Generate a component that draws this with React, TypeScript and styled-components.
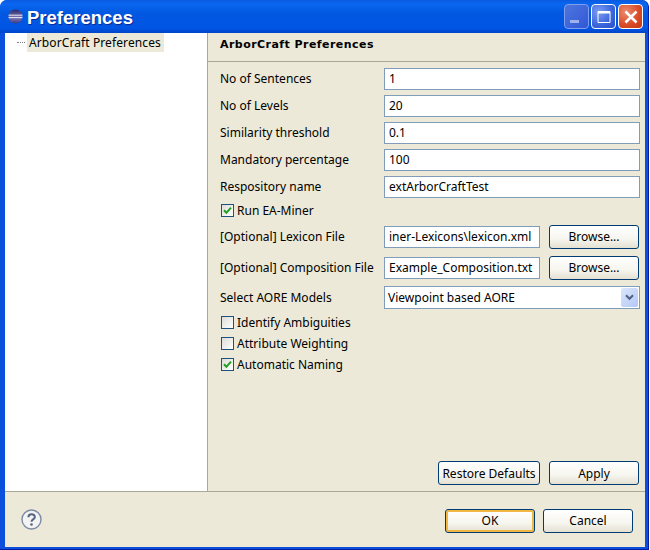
import React, { FunctionComponent } from 'react'
import styled, { createGlobalStyle } from 'styled-components'

const GlobalStyle = createGlobalStyle`
  html, body {
    margin: 0;
    padding: 0;
    background: #ffffff;
  }
  body {
    width: 650px;
    height: 550px;
    overflow: hidden;
    font-family: "Noto Sans", "Liberation Sans", sans-serif;
    font-size: 12px;
    color: #000000;
  }
`

const Window = styled.div`
  width: 649px;
  height: 550px;
  box-sizing: border-box;
  display: flex;
  flex-direction: column;
  background: #0a50dc;
  border-radius: 7px 7px 0 0;
  border-right: 1px solid #001ea0;
  border-bottom: 1px solid #001ea0;
`

const TitleBar = styled.div`
  height: 33px;
  flex: none;
  display: flex;
  align-items: center;
  padding: 0 5px 0 8px;
  gap: 4px;
  background: linear-gradient(180deg, #0a5ae0 0%, #0a66f0 12%, #0258e0 40%, #0055e5 85%, #0046c8 100%);
  border-radius: 7px 7px 0 0;
`

const TitleText = styled.div`
  flex: 1;
  padding-top: 3px;
  font-family: "Liberation Sans", sans-serif;
  font-weight: 700;
  font-size: 18.5px;
  color: #ffffff;
  text-shadow: 1px 1px 0 #0a2a90;
`

const WindowButtons = styled.div`
  display: flex;
  gap: 2px;
`

const WindowButton = styled.div<{ $kind: 'min' | 'max' | 'close' }>`
  width: 25px;
  height: 25px;
  box-sizing: border-box;
  border-radius: 4px;
  display: flex;
  align-items: center;
  justify-content: center;
  border: 1px solid ${({ $kind }) => ($kind === 'min' ? '#7f9ef0' : '#ffffff')};
  background: ${({ $kind }) =>
    $kind === 'close'
      ? 'radial-gradient(circle at 30% 30%, #ec8a70, #d84a25 60%, #c23a18)'
      : $kind === 'max'
        ? 'radial-gradient(circle at 30% 30%, #7c9cf2, #3a64dc 60%, #2a50cc)'
        : 'linear-gradient(135deg, #4f75dc, #3058d8)'};
`

const MinimizeBar = styled.span`
  width: 9px;
  height: 3px;
  margin: 9px 5px 0 0;
  background: #9db2ea;
`

const Body = styled.div`
  flex: 1;
  min-height: 0;
  margin: 0 3px 2px 5px;
  display: flex;
  flex-direction: column;
  background: #ece9d8;
`

const Main = styled.div`
  height: 458px;
  flex: none;
  display: flex;
  border-bottom: 1px solid #aca899;
`

const TreePane = styled.div`
  width: 202px;
  flex: none;
  background: #ffffff;
`

const TreeRow = styled.div`
  display: flex;
  align-items: center;
  height: 19px;
  padding-left: 12px;
  gap: 2px;
`

const TreeDots = styled.span`
  width: 8px;
  border-top: 1px dotted #808080;
`

const TreeLabel = styled.span`
  background: #ece9d8;
  padding: 0 3px 0 2px;
  line-height: 19px;
  letter-spacing: 0.1px;
`

const Page = styled.div`
  flex: 1;
  display: flex;
  flex-direction: column;
  border-left: 1px solid #aca899;
`

const PageTitle = styled.div`
  height: 29px;
  flex: none;
  box-sizing: border-box;
  padding: 3px 0 0 12px;
  font-family: "DejaVu Sans", sans-serif;
  font-weight: 700;
  font-size: 11px;
  letter-spacing: 0.45px;
  line-height: 18px;
  border-bottom: 1px solid #aca899;
`

const Form = styled.div`
  flex: 1;
  display: flex;
  flex-direction: column;
  padding: 3px 5px 0 12px;
`

const Row = styled.div<{ $height: number }>`
  display: flex;
  align-items: center;
  height: ${({ $height }) => $height}px;
`

const Label = styled.div`
  width: 164px;
  flex: none;
`

const TextBox = styled.div`
  flex: 1;
  height: 22px;
  box-sizing: border-box;
  border: 1px solid #7f9db9;
  background: #ffffff;
  padding: 0 4px;
  line-height: 20px;
  overflow: hidden;
  white-space: nowrap;
`

const ShortBox = styled(TextBox)`
  flex: none;
  width: 156px;
`

const Button = styled.div<{ $width: number; $default?: boolean }>`
  width: ${({ $width }) => $width}px;
  height: 24px;
  flex: none;
  box-sizing: border-box;
  border: 1px solid #003c74;
  border-radius: 3px;
  display: flex;
  align-items: center;
  justify-content: center;
  background: linear-gradient(180deg, #ffffff 0%, #f6f5ee 60%, #e4e1d2 100%);
  box-shadow: ${({ $default }) => ($default ? 'inset 0 0 0 2px #f2b740' : 'none')};
`

const BrowseButton = styled(Button)`
  margin-left: 9px;
`

const Select = styled(TextBox)`
  height: 23px;
  display: flex;
  align-items: center;
  padding: 0 1px 0 3px;
`

const SelectText = styled.span`
  flex: 1;
`

const SelectArrow = styled.div`
  width: 17px;
  height: 19px;
  border-radius: 2px;
  background: linear-gradient(135deg, #dbe6fc, #b4c8f6);
  display: flex;
  align-items: center;
  justify-content: center;
`

const CheckRow = styled.label`
  display: flex;
  align-items: center;
  height: 21px;
  gap: 3px;
  padding-left: 1px;
`

const CheckBox = styled.span`
  width: 13px;
  height: 13px;
  box-sizing: border-box;
  border: 1px solid #1c5180;
  background: linear-gradient(135deg, #dcdcd7, #ffffff);
  display: flex;
  align-items: center;
  justify-content: center;
`

const Spacer = styled.div`
  flex: 1;
`

const PageActions = styled.div`
  display: flex;
  justify-content: flex-end;
  gap: 9px;
  padding: 0 1px 6px 0;
`

const Footer = styled.div`
  flex: 1;
  display: flex;
  align-items: center;
  justify-content: space-between;
  padding: 0 12px 0 16px;
`

const FooterButtons = styled.div`
  display: flex;
  gap: 8px;
  margin-top: 2px;
`

const EclipseLogo = () => (
  <svg width="15" height="15" viewBox="0 0 15 15">
    <defs>
      <linearGradient id="eclipse" x1="0" y1="0" x2="0" y2="1">
        <stop offset="0" stopColor="#2c2a6c" />
        <stop offset="0.6" stopColor="#7a78b4" />
        <stop offset="1" stopColor="#3a3880" />
      </linearGradient>
    </defs>
    <circle cx="7.5" cy="7.5" r="7" fill="url(#eclipse)" />
    <path d="M0.6 6.2h13.8M0.6 8.6h13.8" stroke="#e8e8f4" strokeWidth="1" />
  </svg>
)

const Check = () => (
  <svg width="9" height="9" viewBox="0 0 9 9">
    <path d="M1 4.2 3.4 6.8 8 1.6" fill="none" stroke="#21a121" strokeWidth="2" />
  </svg>
)

const Chevron = () => (
  <svg width="9" height="7" viewBox="0 0 9 7">
    <path d="M1 1.2 4.5 4.8 8 1.2" fill="none" stroke="#4d6185" strokeWidth="2" />
  </svg>
)

const HelpIcon = () => (
  <svg width="21" height="21" viewBox="0 0 21 21">
    <circle cx="10.5" cy="10.5" r="9.5" fill="#f3f3f3" stroke="#7d8ba8" strokeWidth="1.4" />
    <path d="M7.4 8.2c0-4 6.4-4 6.4-.2 0 2.4-3.3 2.4-3.3 4.8" fill="none" stroke="#55647f" strokeWidth="2" />
    <circle cx="10.5" cy="15.5" r="1.3" fill="#55647f" />
  </svg>
)

const App: FunctionComponent = () => (
  <>
    <GlobalStyle />
    <Window>
      <TitleBar>
        <EclipseLogo />
        <TitleText>Preferences</TitleText>
        <WindowButtons>
          <WindowButton $kind="min">
            <MinimizeBar />
          </WindowButton>
          <WindowButton $kind="max">
            <svg width="14" height="14" viewBox="0 0 14 14">
              <path d="M1 1.5h12v11H1z" fill="none" stroke="#ffffff" strokeWidth="1" />
              <path d="M1 2.5h12" stroke="#ffffff" strokeWidth="2" />
            </svg>
          </WindowButton>
          <WindowButton $kind="close">
            <svg width="16" height="16" viewBox="0 0 16 16">
              <path d="M2.5 2.5 13.5 13.5M13.5 2.5 2.5 13.5" stroke="#ffffff" strokeWidth="2.6" />
            </svg>
          </WindowButton>
        </WindowButtons>
      </TitleBar>
      <Body>
        <Main>
          <TreePane>
            <TreeRow>
              <TreeDots />
              <TreeLabel>ArborCraft Preferences</TreeLabel>
            </TreeRow>
          </TreePane>
          <Page>
            <PageTitle>ArborCraft Preferences</PageTitle>
            <Form>
              <Row $height={27}>
                <Label>No of Sentences</Label>
                <TextBox>1</TextBox>
              </Row>
              <Row $height={27}>
                <Label>No of Levels</Label>
                <TextBox>20</TextBox>
              </Row>
              <Row $height={27}>
                <Label>Similarity threshold</Label>
                <TextBox>0.1</TextBox>
              </Row>
              <Row $height={27}>
                <Label>Mandatory percentage</Label>
                <TextBox>100</TextBox>
              </Row>
              <Row $height={27}>
                <Label>Respository name</Label>
                <TextBox>extArborCraftTest</TextBox>
              </Row>
              <CheckRow>
                <CheckBox>
                  <Check />
                </CheckBox>
                Run EA-Miner
              </CheckRow>
              <Row $height={31}>
                <Label>[Optional] Lexicon File</Label>
                <ShortBox>iner-Lexicons\lexicon.xml</ShortBox>
                <BrowseButton $width={90}>Browse...</BrowseButton>
              </Row>
              <Row $height={31}>
                <Label>[Optional] Composition File</Label>
                <ShortBox>Example_Composition.txt</ShortBox>
                <BrowseButton $width={90}>Browse...</BrowseButton>
              </Row>
              <Row $height={29}>
                <Label>Select AORE Models</Label>
                <Select>
                  <SelectText>Viewpoint based AORE</SelectText>
                  <SelectArrow>
                    <Chevron />
                  </SelectArrow>
                </Select>
              </Row>
              <CheckRow>
                <CheckBox />
                Identify Ambiguities
              </CheckRow>
              <CheckRow>
                <CheckBox />
                Attribute Weighting
              </CheckRow>
              <CheckRow>
                <CheckBox>
                  <Check />
                </CheckBox>
                Automatic Naming
              </CheckRow>
              <Spacer />
              <PageActions>
                <Button $width={102}>Restore Defaults</Button>
                <Button $width={90}>Apply</Button>
              </PageActions>
            </Form>
          </Page>
        </Main>
        <Footer>
          <HelpIcon />
          <FooterButtons>
            <Button $width={90} $default>
              OK
            </Button>
            <Button $width={90}>Cancel</Button>
          </FooterButtons>
        </Footer>
      </Body>
    </Window>
  </>
)

export default App
